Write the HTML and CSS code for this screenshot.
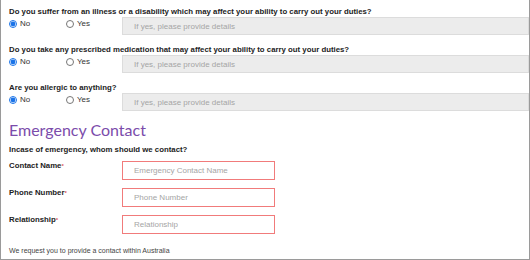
FILE: index.html
```html
<!DOCTYPE html>
<html lang="en">

<head>
    <meta charset="UTF-8">
    <meta name="viewport" content="width=device-width, initial-scale=1.0">
    <title>Health and Emergency Contact</title>
    <link rel="stylesheet" href="styles.css">
</head>

<body>
    <div class="frame">
        <!-- Health questions -->
        <div class="question">
            <div class="q-text">Do you suffer from an illness or a disability which may affect your ability to carry out your duties?</div>
            <div class="q-row">
                <label class="radio"><input type="radio" name="q1" checked> No</label>
                <label class="radio"><input type="radio" name="q1"> Yes</label>
                <input type="text" class="details" placeholder="If yes, please provide details">
            </div>
        </div>

        <div class="question">
            <div class="q-text">Do you take any prescribed medication that may affect your ability to carry out your duties?</div>
            <div class="q-row">
                <label class="radio"><input type="radio" name="q2" checked> No</label>
                <label class="radio"><input type="radio" name="q2"> Yes</label>
                <input type="text" class="details" placeholder="If yes, please provide details">
            </div>
        </div>

        <div class="question">
            <div class="q-text">Are you allergic to anything?</div>
            <div class="q-row">
                <label class="radio"><input type="radio" name="q3" checked> No</label>
                <label class="radio"><input type="radio" name="q3"> Yes</label>
                <input type="text" class="details" placeholder="If yes, please provide details">
            </div>
        </div>

        <!-- Emergency contact -->
        <h2>Emergency Contact</h2>
        <div class="sub">Incase of emergency, whom should we contact?</div>

        <div class="field">
            <label for="contactName">Contact Name<span class="req">*</span></label>
            <input type="text" id="contactName" placeholder="Emergency Contact Name">
        </div>
        <div class="field">
            <label for="phone">Phone Number<span class="req">*</span></label>
            <input type="text" id="phone" placeholder="Phone Number">
        </div>
        <div class="field">
            <label for="relationship">Relationship<span class="req">*</span></label>
            <input type="text" id="relationship" placeholder="Relationship">
        </div>

        <p class="note">We request you to provide a contact within Australia</p>
    </div>
</body>

</html>
```

FILE: styles.css
```css
body {
    margin: 0;
    font-family: "Liberation Sans", Arial, sans-serif;
    color: #222;
    background: #fff;
}

.frame {
    height: 260px;
    box-sizing: border-box;
    border: 1px solid #9a9a9a;
    border-top: none;
    padding: 7px 0 0 8px;
    overflow: hidden;
}

.question {
    margin-bottom: 10px;
}

.q-text {
    font-size: 7.8px;
    font-weight: bold;
    line-height: 10px;
}

.q-row {
    display: flex;
    align-items: flex-start;
}

.radio {
    display: flex;
    align-items: center;
    gap: 3px;
    font-size: 8px;
    line-height: 10px;
    color: #333;
    margin-top: 2px;
}

.radio:first-child {
    width: 57px;
}

.radio:nth-child(2) {
    width: 56px;
}

.radio input {
    width: 8px;
    height: 8px;
    margin: 0;
    accent-color: #1a73e8;
}

.details {
    flex: 1;
    height: 18px;
    box-sizing: border-box;
    border: 1px solid #dcdcdc;
    background: #ececec;
    padding: 0 11px;
    font-family: inherit;
    font-size: 8px;
}

.details::placeholder,
.field input::placeholder {
    color: #a5a5a5;
}

h2 {
    font-family: Lato, sans-serif;
    font-weight: 400;
    font-size: 16px;
    line-height: 22px;
    color: #7b4cab;
    margin: -2px 0 4px 0;
}

.sub {
    font-size: 7.8px;
    font-weight: bold;
    line-height: 10px;
    margin-bottom: 6px;
}

.field {
    display: flex;
    align-items: flex-start;
    margin-bottom: 8px;
}

.field label {
    width: 113px;
    font-size: 7.8px;
    font-weight: bold;
    line-height: 10px;
}

.req {
    color: #e05a5a;
    font-size: 6px;
    vertical-align: top;
}

.field input {
    width: 153px;
    height: 19px;
    box-sizing: border-box;
    border: 1px solid #f17b7b;
    background: #fff;
    padding: 0 11px;
    font-family: inherit;
    font-size: 8px;
}

.note {
    margin: 12px 0 0 0;
    font-size: 7px;
    line-height: 10px;
    color: #444;
}
```
